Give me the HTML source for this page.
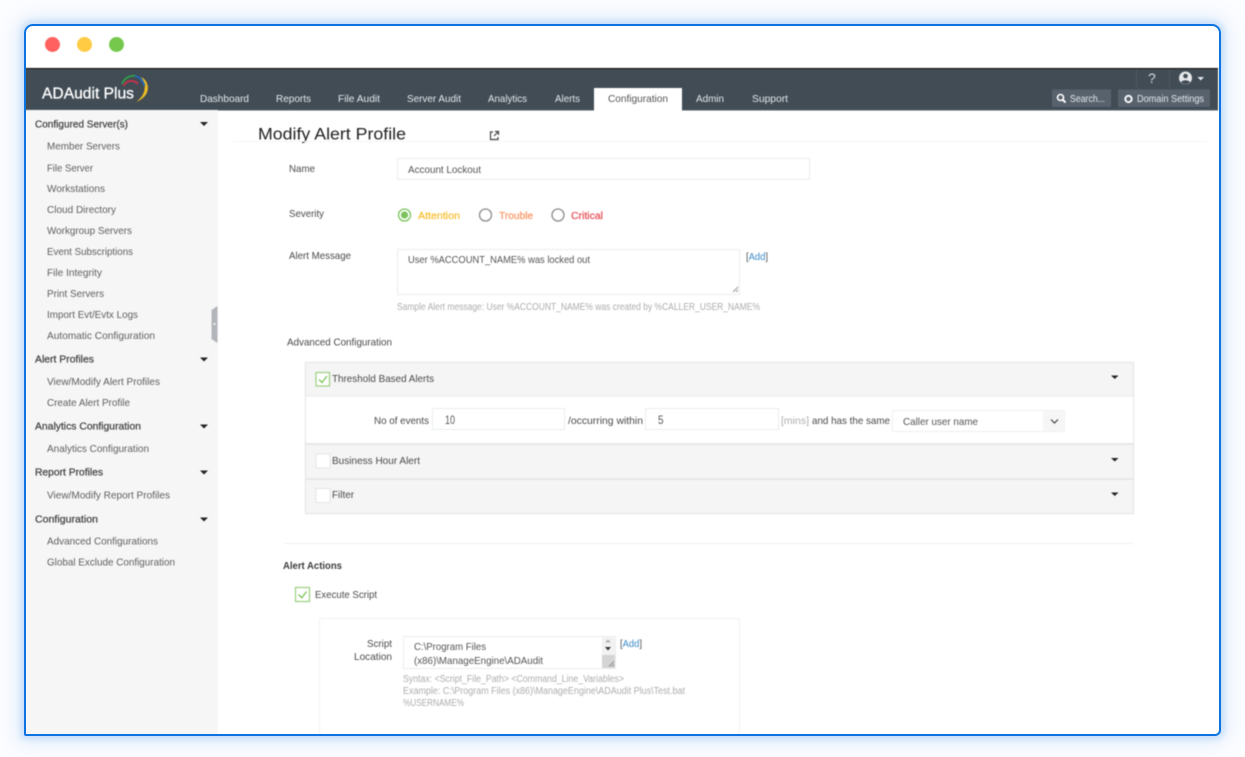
<!DOCTYPE html>
<html lang="en">
<head>
<meta charset="utf-8">
<title>ADAudit Plus - Modify Alert Profile</title>
<style>
html,body{margin:0;padding:0;width:1245px;height:757px;overflow:hidden;background:#fcfdff}
#glow{position:absolute;left:24px;top:24px;width:1197px;height:712px;box-sizing:border-box;border-radius:9px 9px 6px 2px;box-shadow:0 0 6px 4px rgba(10,116,226,.14),0 0 22px 9px rgba(10,116,226,.09)}
#art{position:absolute;left:0;top:0;filter:blur(.4px)}
#frame{position:absolute;left:24px;top:24px;width:1197px;height:712px;box-sizing:border-box;border:2px solid #0b74e0;border-radius:9px 9px 6px 2px}
text{font-family:"Liberation Sans",sans-serif;font-size:10.5px;fill:#555}
.n{fill:#e4e8ec}
.h{fill:#444;stroke:#444;stroke-width:.25}
.i{fill:#5f5f5f}
.d{fill:#4a4a4a}
.g{fill:#adadad;font-size:10px}
.a{fill:#3a8cc8}
.v{font-size:11.5px}
</style>
</head>
<body>
<div id="glow"></div>
<svg id="art" width="1245" height="757" viewBox="0 0 1245 757" xmlns="http://www.w3.org/2000/svg">
<rect x="25" y="25" width="1195" height="710" rx="8" fill="#fff"/>
<circle cx="52.5" cy="44.5" r="7.5" fill="#ff6161"/>
<circle cx="84.5" cy="44.5" r="7.5" fill="#ffcb45"/>
<circle cx="116.5" cy="44.5" r="7.5" fill="#76c84d"/>

<rect x="25" y="68" width="1193" height="42" fill="#414c55"/>
<rect x="25" y="68" width="1193" height="1" fill="#0c0c0c"/>
<rect x="25" y="109" width="1193" height="1.5" fill="#4f5860"/>

<text x="42" y="98.5" textLength="92" lengthAdjust="spacingAndGlyphs" style="font-size:15.5px;fill:#fff;stroke:#fff;stroke-width:.3">ADAudit Plus</text>
<path d="M141 77C150 81 152 96 136 102C146 95 147 85 141 77Z" fill="#ecbc22"/>
<path d="M122 84C125 77 131 75 136 76" fill="none" stroke="#2f9a4a" stroke-width="2"/>
<path d="M135 76C140 77 143 81 144.500 86" fill="none" stroke="#2468b4" stroke-width="2"/>
<path d="M123.500 86C127 79.500 134 79.500 138 84" fill="none" stroke="#c9304a" stroke-width="1.800"/>

<text class="n" x="200" y="102" textLength="49" lengthAdjust="spacingAndGlyphs">Dashboard</text>
<text class="n" x="276" y="102" textLength="35" lengthAdjust="spacingAndGlyphs">Reports</text>
<text class="n" x="338" y="102" textLength="42" lengthAdjust="spacingAndGlyphs">File Audit</text>
<text class="n" x="407" y="102" textLength="54" lengthAdjust="spacingAndGlyphs">Server Audit</text>
<text class="n" x="488" y="102" textLength="39" lengthAdjust="spacingAndGlyphs">Analytics</text>
<text class="n" x="555" y="102" textLength="25" lengthAdjust="spacingAndGlyphs">Alerts</text>
<rect x="594" y="88" width="88" height="23" fill="#fff"/>
<text x="608" y="102" textLength="60" lengthAdjust="spacingAndGlyphs">Configuration</text>
<text class="n" x="696" y="102" textLength="28" lengthAdjust="spacingAndGlyphs">Admin</text>
<text class="n" x="752" y="102" textLength="36" lengthAdjust="spacingAndGlyphs">Support</text>

<rect x="1136" y="70" width="1" height="18" fill="#4f5962"/>
<rect x="1169" y="70" width="1" height="18" fill="#4f5962"/>
<text x="1148" y="83" style="font-size:14px;fill:#d5d9dc">?</text>
<circle cx="1185.500" cy="78" r="6.500" fill="#e6e8ea"/>
<circle cx="1185.500" cy="76" r="2.300" fill="#414c55"/>
<path d="M1181 82.500C1182 79.500 1189 79.500 1190 82.500L1187 84.300H1184Z" fill="#414c55"/>
<path d="M1197.500 77H1204L1200.750 80.500Z" fill="#e6e8ea"/>
<rect x="1052" y="89.500" width="59" height="17.500" rx="1" fill="#58626d"/>
<circle cx="1060.500" cy="97.500" r="3" fill="none" stroke="#fff" stroke-width="1.600"/>
<path d="M1062.700 99.700L1065.500 102.500" stroke="#fff" stroke-width="2"/>
<text class="n" x="1070" y="102" textLength="35" lengthAdjust="spacingAndGlyphs">Search...</text>
<rect x="1118" y="89.500" width="92" height="17.500" rx="1" fill="#58626d"/>
<circle cx="1128.500" cy="99" r="3.200" fill="none" stroke="#fff" stroke-width="1.900"/>
<text class="n" x="1137" y="102" textLength="67" lengthAdjust="spacingAndGlyphs">Domain Settings</text>

<rect x="25" y="110" width="193" height="625" fill="#f6f6f6"/>
<path d="M217.500 306L211.500 310V339L217.500 343Z" fill="#b2b6ba"/>
<rect x="213.500" y="323" width="2" height="2" fill="#f0f0f0"/>

<text class="h" x="35" y="127.500" textLength="93" lengthAdjust="spacingAndGlyphs">Configured Server(s)</text>
<path d="M200 122H208L204 126Z" fill="#222"/>
<text class="i" x="47" y="149.500" textLength="73" lengthAdjust="spacingAndGlyphs">Member Servers</text>
<text class="i" x="47" y="171.500" textLength="46" lengthAdjust="spacingAndGlyphs">File Server</text>
<text class="i" x="47" y="192" textLength="58" lengthAdjust="spacingAndGlyphs">Workstations</text>
<text class="i" x="47" y="213" textLength="69" lengthAdjust="spacingAndGlyphs">Cloud Directory</text>
<text class="i" x="47" y="234" textLength="85" lengthAdjust="spacingAndGlyphs">Workgroup Servers</text>
<text class="i" x="47" y="255" textLength="86" lengthAdjust="spacingAndGlyphs">Event Subscriptions</text>
<text class="i" x="47" y="276" textLength="55" lengthAdjust="spacingAndGlyphs">File Integrity</text>
<text class="i" x="47" y="297" textLength="57" lengthAdjust="spacingAndGlyphs">Print Servers</text>
<text class="i" x="47" y="318" textLength="91" lengthAdjust="spacingAndGlyphs">Import Evt/Evtx Logs</text>
<text class="i" x="47" y="339" textLength="108" lengthAdjust="spacingAndGlyphs">Automatic Configuration</text>
<text class="h" x="35" y="362.500" textLength="59" lengthAdjust="spacingAndGlyphs">Alert Profiles</text>
<path d="M200 357.500H208L204 361.500Z" fill="#222"/>
<text class="i" x="47" y="385" textLength="113" lengthAdjust="spacingAndGlyphs">View/Modify Alert Profiles</text>
<text class="i" x="47" y="406" textLength="83" lengthAdjust="spacingAndGlyphs">Create Alert Profile</text>
<text class="h" x="35" y="429.500" textLength="106" lengthAdjust="spacingAndGlyphs">Analytics Configuration</text>
<path d="M200 424.500H208L204 428.500Z" fill="#222"/>
<text class="i" x="47" y="452" textLength="102" lengthAdjust="spacingAndGlyphs">Analytics Configuration</text>
<text class="h" x="35" y="475.500" textLength="68" lengthAdjust="spacingAndGlyphs">Report Profiles</text>
<path d="M200 470.500H208L204 474.500Z" fill="#222"/>
<text class="i" x="47" y="498.500" textLength="123" lengthAdjust="spacingAndGlyphs">View/Modify Report Profiles</text>
<text class="h" x="35" y="522.500" textLength="63" lengthAdjust="spacingAndGlyphs">Configuration</text>
<path d="M200 517.500H208L204 521.500Z" fill="#222"/>
<text class="i" x="47" y="544.500" textLength="111" lengthAdjust="spacingAndGlyphs">Advanced Configurations</text>
<text class="i" x="47" y="565.500" textLength="128" lengthAdjust="spacingAndGlyphs">Global Exclude Configuration</text>

<text x="258" y="139.500" textLength="148" lengthAdjust="spacingAndGlyphs" style="font-size:16.500px;fill:#222">Modify Alert Profile</text>
<rect x="233" y="141" width="975" height="1" fill="#f5f5f5"/>
<path d="M493 132H490.500V139.500H498V137M494 136L498 132M495 131.500H498.500V135" fill="none" stroke="#444" stroke-width="1.200"/>

<text class="d" x="289" y="172" textLength="26" lengthAdjust="spacingAndGlyphs">Name</text>
<rect x="397.500" y="158.500" width="412" height="21" fill="#fff" stroke="#eef1f1" stroke-width="1.300"/>
<text x="408" y="173" textLength="73" lengthAdjust="spacingAndGlyphs">Account Lockout</text>

<text class="d" x="289" y="217" textLength="35" lengthAdjust="spacingAndGlyphs">Severity</text>
<circle cx="404.500" cy="215" r="6" fill="#fff" stroke="#7ac35a" stroke-width="1.300"/>
<circle cx="404.500" cy="215" r="3.600" fill="#7ac35a"/>
<text x="418" y="219" textLength="42" lengthAdjust="spacingAndGlyphs" style="fill:#f9c33c;stroke:#f9c33c;stroke-width:.3">Attention</text>
<circle cx="485.500" cy="215" r="6" fill="#fff" stroke="#8a8a8a" stroke-width="1.300"/>
<text x="499" y="219" textLength="34" lengthAdjust="spacingAndGlyphs" style="fill:#fb9a6a;stroke:#fb9a6a;stroke-width:.3">Trouble</text>
<circle cx="558" cy="215" r="6" fill="#fff" stroke="#8a8a8a" stroke-width="1.300"/>
<text x="571" y="219" textLength="32" lengthAdjust="spacingAndGlyphs" style="fill:#e8575f;stroke:#e8575f;stroke-width:.3">Critical</text>

<text class="d" x="289" y="259" textLength="62" lengthAdjust="spacingAndGlyphs">Alert Message</text>
<rect x="397.500" y="249.500" width="342" height="45" fill="#fff" stroke="#eef1f1" stroke-width="1.300"/>
<text x="408" y="263" textLength="182" lengthAdjust="spacingAndGlyphs">User %ACCOUNT_NAME% was locked out</text>
<path d="M733 292L738 287M736 292L738 290" stroke="#777" stroke-width=".8"/>
<text x="746" y="260" textLength="22" lengthAdjust="spacingAndGlyphs" class="a"><tspan style="fill:#555">[</tspan>Add<tspan style="fill:#555">]</tspan></text>
<text class="g" x="397" y="310" textLength="363" lengthAdjust="spacingAndGlyphs">Sample Alert message: User %ACCOUNT_NAME% was created by %CALLER_USER_NAME%</text>
<text class="d" x="287" y="345.500" textLength="105" lengthAdjust="spacingAndGlyphs">Advanced Configuration</text>

<rect x="305.500" y="362.500" width="828" height="151" fill="#f5f5f5" stroke="#e6e8e8" stroke-width="1.300"/>
<rect x="306" y="396" width="827" height="47.500" fill="#fff"/>
<rect x="306" y="395.500" width="827" height="1" fill="#e8eaea"/>
<rect x="306" y="443" width="827" height="2" fill="#e4e8ea"/>
<rect x="306" y="478" width="827" height="2" fill="#e4e8ea"/>

<rect x="316" y="372.500" width="13.500" height="13.500" fill="#fff" stroke="#9ad07e" stroke-width="1.200"/>
<path d="M319 379.500L322 382.500L327 376" fill="none" stroke="#7ac35a" stroke-width="1.300"/>
<text class="d" x="332" y="382" textLength="102" lengthAdjust="spacingAndGlyphs">Threshold Based Alerts</text>
<path d="M1111 375.500H1118.500L1114.750 379Z" fill="#222"/>

<text class="d" x="374" y="424" textLength="55" lengthAdjust="spacingAndGlyphs">No of events</text>
<rect x="432.500" y="408.500" width="132" height="21" fill="#fff" stroke="#eef1f1" stroke-width="1.300"/>
<text class="v" x="445" y="424" textLength="10" lengthAdjust="spacingAndGlyphs">10</text>
<text class="d" x="568" y="424" textLength="75" lengthAdjust="spacingAndGlyphs">/occurring within</text>
<rect x="645.500" y="408.500" width="133" height="21" fill="#fff" stroke="#eef1f1" stroke-width="1.300"/>
<text class="v" x="658" y="424" textLength="5.500" lengthAdjust="spacingAndGlyphs">5</text>
<text class="g" x="781" y="424" textLength="28" lengthAdjust="spacingAndGlyphs">[mins]</text>
<text class="d" x="812" y="424" textLength="78" lengthAdjust="spacingAndGlyphs">and has the same</text>
<rect x="892.500" y="410.500" width="172" height="21" fill="#fff" stroke="#f0f2f2" stroke-width="1.300"/>
<rect x="1043" y="411" width="21.500" height="20" fill="#f6f6f6"/>
<text x="903" y="425" textLength="75" lengthAdjust="spacingAndGlyphs">Caller user name</text>
<path d="M1051 419.500L1054.500 423L1058 419.500" fill="none" stroke="#444" stroke-width="1.200"/>

<rect x="316" y="454" width="14" height="14" fill="#fff" stroke="#e6e6e6"/>
<text class="d" x="332" y="464" textLength="88" lengthAdjust="spacingAndGlyphs">Business Hour Alert</text>
<path d="M1111 458H1118.500L1114.750 461.500Z" fill="#222"/>
<rect x="316" y="488.500" width="14" height="14" fill="#fff" stroke="#e6e6e6"/>
<text class="d" x="332" y="498" textLength="22" lengthAdjust="spacingAndGlyphs">Filter</text>
<path d="M1111 492.500H1118.500L1114.750 496Z" fill="#222"/>

<rect x="284" y="543" width="850" height="1" fill="#efefef"/>
<text x="283" y="569" textLength="59" lengthAdjust="spacingAndGlyphs" style="fill:#3d3d3d;font-weight:bold">Alert Actions</text>
<rect x="295.500" y="587.500" width="14" height="14" fill="#fff" stroke="#9ad07e" stroke-width="1.200"/>
<path d="M298.500 594.500L301.800 597.800L306.500 591.500" fill="none" stroke="#7ac35a" stroke-width="1.300"/>
<text class="d" x="315" y="598" textLength="62" lengthAdjust="spacingAndGlyphs">Execute Script</text>

<path d="M319.500 735V618.500H739.500V735" fill="#fff" stroke="#f3f3f3"/>
<text class="d" x="367" y="647" textLength="25" lengthAdjust="spacingAndGlyphs">Script</text>
<text class="d" x="354" y="660" textLength="38" lengthAdjust="spacingAndGlyphs">Location</text>
<rect x="403.500" y="636.500" width="212" height="32" fill="#fff" stroke="#eef1f1" stroke-width="1.300"/>
<text x="414" y="650" textLength="72" lengthAdjust="spacingAndGlyphs">C:\Program Files</text>
<text x="414" y="664" textLength="129" lengthAdjust="spacingAndGlyphs">(x86)\ManageEngine\ADAudit</text>
<rect x="602" y="637" width="13" height="31" fill="#f2f2f2"/>
<rect x="602" y="655" width="13" height="13" fill="#d4d4d4"/>
<path d="M605 642.500H611L608 639.500Z" fill="#b0b0b0"/>
<path d="M605 647H611L608 650.500Z" fill="#333"/>
<path d="M609 666.500L614 661.500M612 666.500L614 664.500" stroke="#777" stroke-width=".8"/>
<text x="620" y="647" textLength="22" lengthAdjust="spacingAndGlyphs" class="a"><tspan style="fill:#555">[</tspan>Add<tspan style="fill:#555">]</tspan></text>
<text class="g" x="403" y="682" textLength="221" lengthAdjust="spacingAndGlyphs">Syntax: &lt;Script_File_Path&gt; &lt;Command_Line_Variables&gt;</text>
<text class="g" x="403" y="694" textLength="282" lengthAdjust="spacingAndGlyphs">Example: C:\Program Files (x86)\ManageEngine\ADAudit Plus\Test.bat</text>
<text class="g" x="403" y="706" textLength="61" lengthAdjust="spacingAndGlyphs">%USERNAME%</text>
</svg>
<div id="frame"></div>
</body>
</html>
